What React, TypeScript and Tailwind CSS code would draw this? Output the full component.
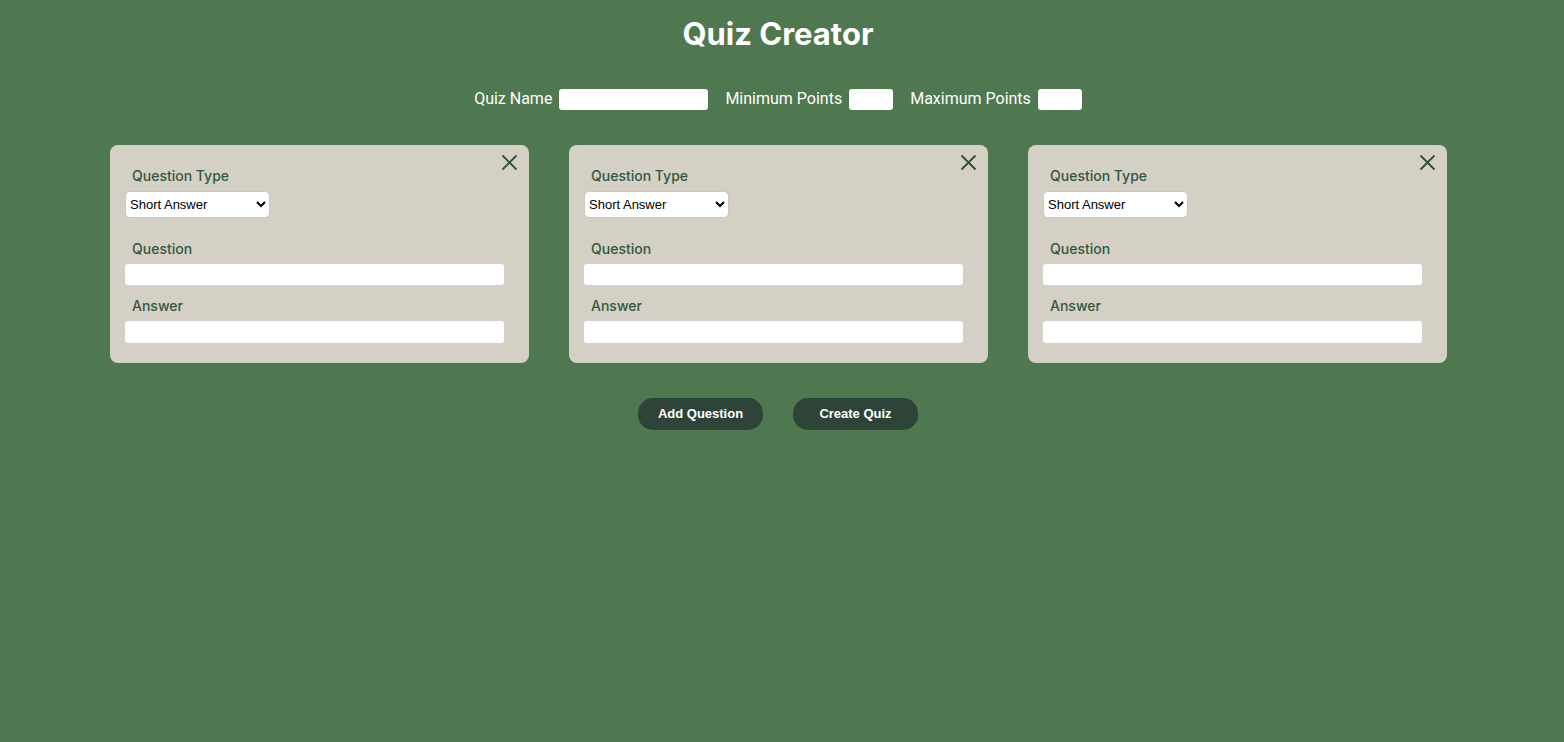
import { useState } from "react";

type Question = { id: number; type: string; question: string; answer: string };

const blankQuestion = (id: number): Question => ({ id, type: "Short Answer", question: "", answer: "" });

const questionTypes = ["Short Answer", "Multiple Choice", "True or False"];

type CardProps = {
  value: Question;
  onChange: (value: Question) => void;
  onRemove: () => void;
};

function QuestionCard({ value, onChange, onRemove }: CardProps) {
  const { id } = value;
  return (
    <section className="relative flex flex-col items-start rounded-lg bg-[#d5d0c5] pt-[21px] pr-[25px] pb-5 pl-[15px] text-sm font-medium text-[#33573d]">
      <button type="button" aria-label="Remove question" onClick={onRemove} className="absolute top-[9px] right-[11px] cursor-pointer">
        <svg viewBox="0 0 17 17" className="size-[17px] stroke-[#2c4f37]" strokeWidth="1.8" fill="none">
          <path d="M1.5 1.5 15.5 15.5M15.5 1.5 1.5 15.5" />
        </svg>
      </button>
      <label htmlFor={`type-${id}`} className="ml-[7px] leading-5">Question Type</label>
      <select
        id={`type-${id}`}
        value={value.type}
        onChange={(e) => onChange({ ...value, type: e.target.value })}
        className="mt-[5px] h-[27px] w-[145px] rounded-[5px] border border-[#c9c8c6] bg-white font-['Liberation_Sans',sans-serif] text-[13px] font-normal text-black"
      >
        {questionTypes.map((t) => (
          <option key={t}>{t}</option>
        ))}
      </select>
      <label htmlFor={`question-${id}`} className="mt-[21px] ml-[7px] leading-5">Question</label>
      <input
        id={`question-${id}`}
        value={value.question}
        onChange={(e) => onChange({ ...value, question: e.target.value })}
        className="mt-[5px] h-[21px] w-full rounded-[3px] bg-white px-1 text-black"
      />
      <label htmlFor={`answer-${id}`} className="mt-[11px] ml-[7px] leading-5">Answer</label>
      <input
        id={`answer-${id}`}
        value={value.answer}
        onChange={(e) => onChange({ ...value, answer: e.target.value })}
        className="mt-[5px] h-[22px] w-full rounded-[3px] bg-white px-1 text-black"
      />
    </section>
  );
}

export default function App() {
  const [questions, setQuestions] = useState([1, 2, 3].map(blankQuestion));

  const update = (next: Question) => setQuestions(questions.map((q) => (q.id === next.id ? next : q)));
  const remove = (id: number) => setQuestions(questions.filter((q) => q.id !== id));
  const add = () => setQuestions([...questions, blankQuestion(Math.max(0, ...questions.map((q) => q.id)) + 1)]);

  return (
    <main className="min-h-screen bg-[#4f7750] pr-2 font-[Inter,sans-serif] text-white">
      <h1 className="pt-4 text-center text-[31px] leading-9 font-bold">Quiz Creator</h1>
      <form onSubmit={(e) => e.preventDefault()} className="pb-8">
        <div className="mt-[37px] flex flex-wrap items-center justify-center gap-x-[17px] gap-y-3 font-[Roboto,sans-serif] text-base leading-[19px]">
          <div className="flex items-start gap-[7px]">
            <label htmlFor="quiz-name">Quiz Name</label>
            <input id="quiz-name" className="h-[21px] w-[149px] rounded-[3px] bg-white px-1 text-sm text-black" />
          </div>
          <div className="flex items-start gap-[7px]">
            <label htmlFor="min-points">Minimum Points</label>
            <input id="min-points" className="h-[21px] w-11 rounded-[3px] bg-white px-1 text-sm text-black" />
          </div>
          <div className="flex items-start gap-[7px]">
            <label htmlFor="max-points">Maximum Points</label>
            <input id="max-points" className="h-[21px] w-11 rounded-[3px] bg-white px-1 text-sm text-black" />
          </div>
        </div>
        <div className="mt-[35px] grid grid-cols-1 gap-10 px-6 md:grid-cols-2 lg:grid-cols-3 xl:pr-[109px] xl:pl-[110px]">
          {questions.map((q) => (
            <QuestionCard key={q.id} value={q} onChange={update} onRemove={() => remove(q.id)} />
          ))}
        </div>
        <div className="mt-[35px] flex justify-center gap-[30px] font-['Liberation_Sans',sans-serif] text-[13px] font-bold">
          <button type="button" onClick={add} className="h-8 w-[125px] cursor-pointer rounded-[15px] bg-[#2e4438]">Add Question</button>
          <button type="submit" className="h-8 w-[125px] cursor-pointer rounded-[15px] bg-[#2e4438]">Create Quiz</button>
        </div>
      </form>
    </main>
  );
}
